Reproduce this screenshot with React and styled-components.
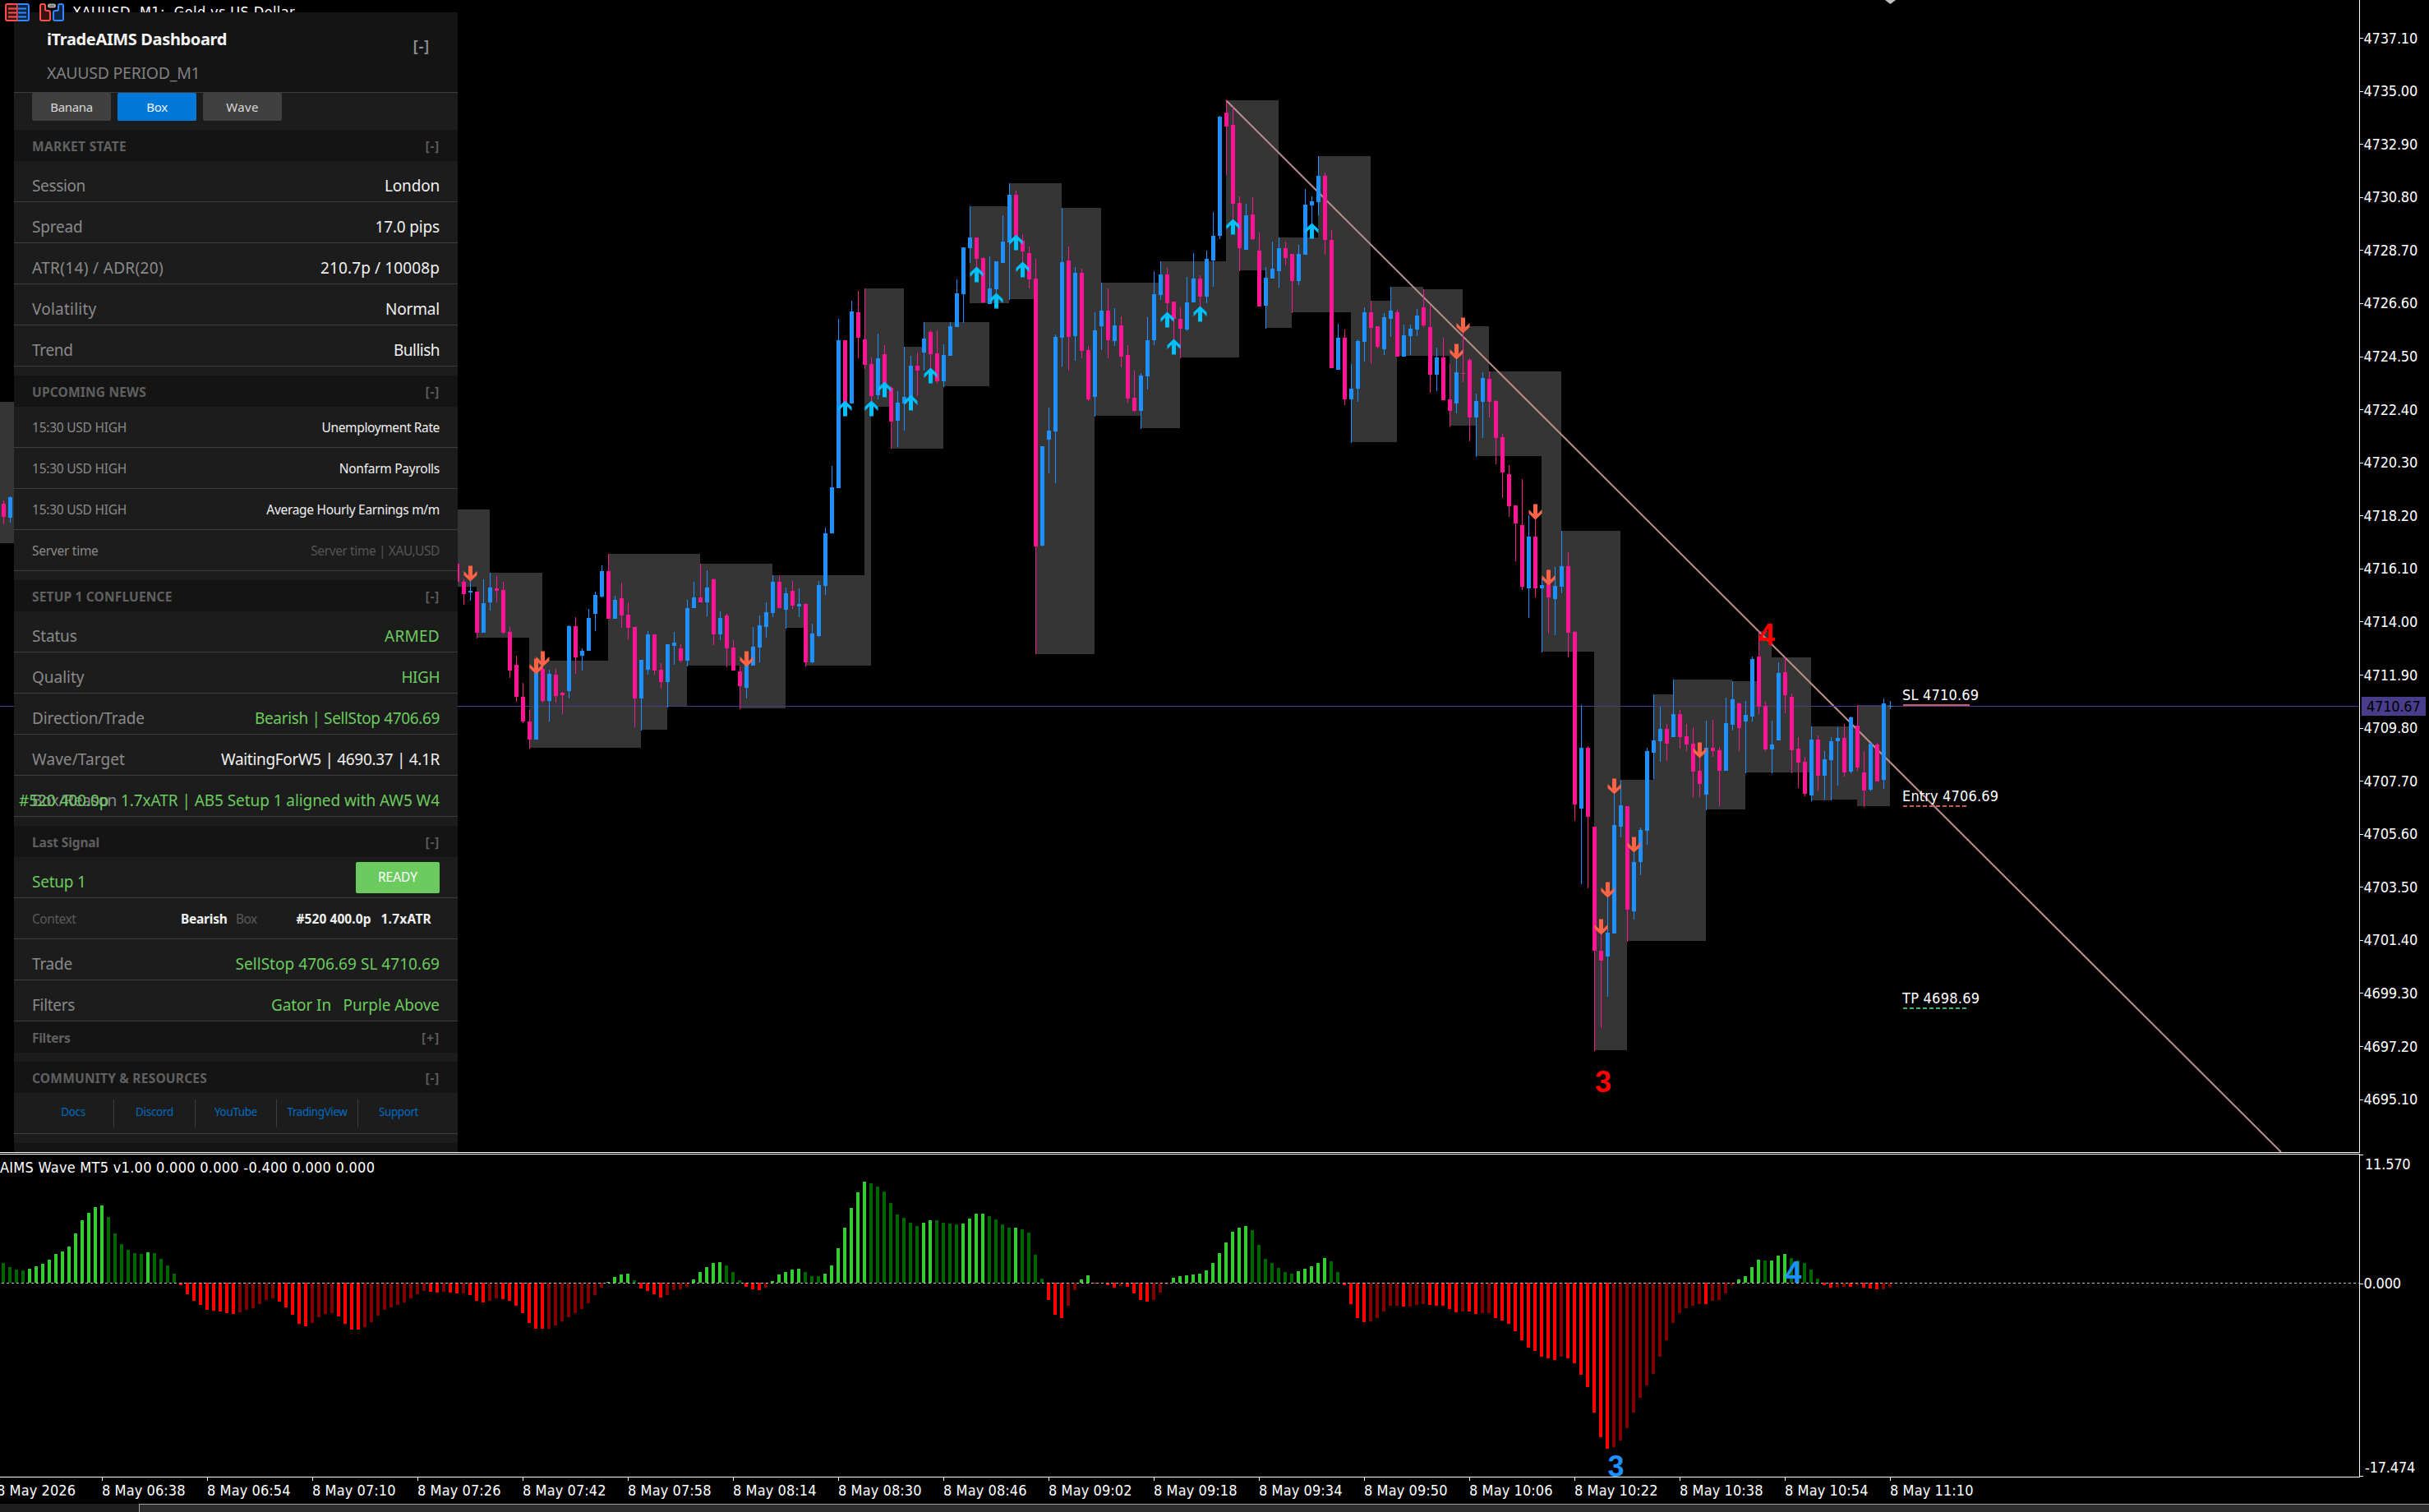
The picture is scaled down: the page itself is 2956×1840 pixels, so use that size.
import React, { useLayoutEffect, useRef, useState } from 'react';
import styled, { createGlobalStyle } from 'styled-components';

const UI_FONT = '"Noto Sans", "Open Sans", sans-serif';
const CHART_FONT = '"DejaVu Sans Condensed", "DejaVu Sans", sans-serif';

const c = {
  up: '#1e90ff',
  down: '#ff1493',
  box: '#353535',
  panel: '#1c1c1c',
  head: '#141414',
  rule: '#3d3d3d',
  green: '#6ccb5f',
  price: '#483d8b',
};

const GlobalStyle = createGlobalStyle`
  * { box-sizing: border-box; }
  body { margin: 0; background: #000; overflow: hidden; }
`;

/* ---------- data ---------- */

// index, direction, high, body top, body bottom, low
const CANDLES = `
0 d 609 613 629 638|1 u 604 605 630 636|69 d 686 686 708 708|70 d 705 708 723 736|71 u 706 719 721 731|72 d 720 720 770 777
73 u 705 734 770 770|74 u 697 715 733 743|75 d 701 716 719 733|76 d 708 718 770 771|77 d 763 769 816 825
78 d 798 809 848 854|79 d 831 848 878 880|80 d 864 878 900 911|81 u 817 818 900 900|82 d 810 814 853 855
83 u 815 820 853 878|84 d 814 821 847 855|85 d 842 843 846 869|86 u 761 762 841 850|87 d 751 762 800 820
88 u 789 792 798 816|89 u 741 752 792 792|90 u 720 724 747 768|91 u 688 695 726 727|92 d 674 695 753 753
93 u 725 730 753 753|94 d 709 728 749 764|95 d 733 748 764 778|96 d 763 763 850 885|97 u 803 803 850 889
98 u 768 772 815 821|99 d 772 772 816 821|100 d 807 815 830 838|101 u 784 784 830 861|102 u 769 782 786 809
103 d 784 789 804 806|104 u 730 740 804 811|105 u 708 727 740 740|106 d 686 727 733 733|107 u 694 715 733 750
108 d 704 705 772 785|109 u 744 752 772 779|110 d 747 749 789 812|111 d 779 788 816 816|112 d 811 817 835 863
113 u 809 809 837 850|114 u 763 787 810 810|115 u 749 761 788 806|116 u 733 745 763 776|117 u 700 708 746 751
118 d 701 708 740 740|119 u 715 722 742 765|120 d 707 719 737 741|121 u 716 735 738 751|122 d 734 735 806 811
123 u 759 771 806 807|124 u 707 712 774 775|125 u 642 649 713 724|126 u 567 593 649 649|127 u 388 414 594 594
128 d 414 414 490 490|129 u 366 379 491 491|130 d 354 380 411 436|131 d 351 413 444 449|132 d 435 443 482 488
133 u 406 436 481 486|134 d 420 431 467 467|135 d 470 472 513 546|136 u 476 490 512 544|137 u 422 483 491 524
138 u 433 445 483 483|139 d 429 445 451 482|140 u 392 412 429 451|141 d 402 404 431 449|142 d 402 430 464 466
143 u 419 432 464 471|144 u 392 397 433 433|145 u 340 357 398 398|146 u 301 301 358 393|147 u 251 289 302 320
148 d 289 289 315 326|149 d 313 314 368 369|150 u 312 351 370 370|151 u 318 318 352 358|152 u 262 294 320 320
153 u 223 237 295 365|154 d 232 237 287 287|155 d 285 293 306 320|156 d 300 308 340 351|157 d 315 339 665 796
158 u 543 543 664 665|159 u 496 524 535 576|160 u 407 410 525 588|161 u 253 319 411 446|162 d 300 317 410 451
163 u 325 332 409 439|164 d 327 332 427 436|165 d 421 426 486 488|166 u 380 402 483 507|167 u 344 378 397 426
168 d 351 378 414 436|169 u 375 396 415 421|170 d 385 396 434 447|171 d 420 432 485 490|172 d 451 484 500 501
173 u 454 457 500 522|174 u 386 414 458 474|175 u 330 358 414 420|176 u 318 334 359 365|177 d 326 334 369 381
178 d 367 367 388 414|179 d 374 388 400 436|180 u 337 368 401 403|181 u 308 339 368 368|182 d 335 339 361 373
183 u 305 315 361 369|184 u 258 287 317 349|185 u 141 142 287 291|186 d 122 137 154 213|187 d 130 152 248 267
188 d 239 247 302 330|189 u 248 262 304 304|190 d 240 261 291 292|191 d 283 305 373 373|192 u 325 338 372 400
193 u 294 327 339 339|194 u 289 302 330 350|195 d 294 302 314 323|196 d 309 309 342 381|197 u 298 309 342 347
198 u 230 249 310 310|199 u 239 245 250 273|200 u 190 214 246 262|201 d 210 214 292 310|202 d 280 292 448 448
203 u 394 411 450 450|204 d 401 411 486 493|205 u 443 473 486 539|206 u 413 415 473 489|207 u 374 380 416 440
208 d 366 380 399 443|209 d 397 397 422 424|210 u 381 386 425 432|211 u 349 378 388 410|212 d 377 380 434 434
213 u 395 408 434 434|214 u 395 400 409 432|215 u 376 384 401 409|216 d 352 374 396 398|217 d 372 398 456 478
218 u 423 435 456 476|219 d 411 435 487 487|220 d 443 486 500 519|221 u 437 453 491 503|222 d 404 454 455 465
223 d 436 438 508 537|224 u 479 488 508 556|225 u 453 460 489 533|226 d 452 461 489 508|227 d 487 488 533 565
228 d 528 532 575 606|229 d 566 577 616 629|230 d 615 615 637 683|231 d 583 639 714 718|232 u 627 653 716 752
233 d 631 653 716 727|234 u 704 712 716 794|235 d 710 711 727 771|236 u 690 713 729 773|237 u 646 689 714 722
238 d 672 689 770 800|239 d 768 769 979 999|240 u 858 910 984 1076|241 d 908 910 994 1081|242 d 1006 1006 1157 1279
243 d 1135 1157 1169 1251|244 u 1091 1135 1164 1213|245 u 965 1004 1136 1136|246 u 949 980 1006 1019
247 d 981 981 1107 1146|248 u 1036 1049 1109 1119|249 u 1007 1010 1049 1065|250 u 910 914 1011 1028
251 u 845 901 916 948|252 u 860 887 902 927|253 d 881 887 905 926|254 u 827 869 897 897|255 d 864 869 897 911
256 d 881 896 906 914|257 d 885 905 939 970|258 d 922 938 954 970|259 u 877 910 967 986|260 d 876 910 914 921
261 d 909 913 938 981|262 u 849 880 938 938|263 u 829 851 882 889|264 d 855 856 886 914|265 u 853 870 878 941
266 u 799 802 872 878|267 d 768 799 860 869|268 d 854 859 912 914|269 u 877 906 912 941|270 u 806 819 901 901
271 d 800 818 846 868|272 d 844 848 913 941|273 d 897 911 928 959|274 d 921 927 966 969|275 u 884 900 968 975
276 d 895 900 944 962|277 u 914 924 944 973|278 u 897 902 925 974|279 u 885 898 902 956|280 d 881 898 940 945
281 u 872 873 939 941|282 d 858 883 934 938|283 d 914 940 962 982|284 u 904 905 961 963|285 d 904 906 951 951
286 u 850 856 949 960|287 u 853 859 860 863`
  .trim()
  .split(/[|\n]/)
  .map((s) => {
    const [i, dir, hi, top, bottom, lo] = s.trim().split(' ');
    return { x: i * 8 + 4, dir, hi: +hi, top: +top, bottom: +bottom, lo: +lo };
  });

// left, top, right, bottom
const BOXES = [
  [0, 489, 20, 661], [550, 620, 596, 714], [580, 697, 660, 776], [644, 776, 660, 804], [644, 804, 780, 910],
  [740, 674, 852, 810], [740, 810, 836, 859], [740, 859, 812, 888], [852, 686, 940, 810], [900, 700, 956, 862],
  [940, 700, 1052, 764], [980, 700, 1060, 810], [1052, 351, 1060, 810], [1052, 351, 1100, 495],
  [1084, 422, 1148, 546], [1124, 392, 1204, 470], [1180, 251, 1228, 369], [1228, 223, 1292, 364],
  [1260, 364, 1332, 796], [1292, 253, 1340, 506], [1340, 344, 1412, 506], [1388, 344, 1436, 521],
  [1412, 318, 1508, 435], [1492, 122, 1556, 329], [1540, 289, 1572, 399], [1556, 289, 1604, 380],
  [1604, 190, 1668, 380], [1644, 380, 1700, 538], [1668, 366, 1700, 538], [1692, 349, 1732, 433],
  [1732, 352, 1780, 433], [1764, 397, 1812, 518], [1796, 452, 1900, 555], [1876, 452, 1900, 793],
  [1900, 646, 1940, 793], [1940, 646, 1972, 949], [1940, 949, 1980, 1278], [1972, 949, 2076, 1145],
  [2012, 845, 2124, 985], [2036, 827, 2108, 985], [2108, 829, 2140, 940], [2140, 768, 2156, 940],
  [2156, 800, 2204, 940], [2204, 884, 2229, 974], [2229, 884, 2268, 973], [2260, 858, 2300, 981],
];

const SELLS = [
  [572, 707], [652, 820], [660, 811], [908, 811], [1780, 405], [1772, 437], [1868, 632], [1884, 712],
  [1964, 966], [1988, 1037], [1956, 1092], [1948, 1137], [2068, 922],
];
const BUYS = [
  [1028, 488], [1060, 488], [1076, 465], [1108, 481], [1132, 448], [1188, 325], [1212, 357], [1236, 286],
  [1244, 319], [1420, 380], [1428, 413], [1460, 373], [1500, 267], [1596, 272],
];

// Histogram runs; L/D = rising/falling above zero, R/M = rising/falling below zero.
// Values are thirds of a pixel, 514 is the zero level.
const WAVE_ZERO = 514;
const WAVE_TONES = { L: '#32cd32', D: '#006400', R: '#ff0000', M: '#800000' };
const WAVE = `
D 441 456 465 468 L 462 453 444 429 408 399 381 333 285 258 237 231 D 273 333 372 393 405 408 L 402
D 405 426 450 480 R 522 555 579 594 612 615 618 624 627 M 621 612 606 591 576 570 R 582 603 630 663 672
M 660 639 627 624 R 636 663 684 684 M 675 657 633 612 603 594 585 570 555 543 R 546 549 M 546 R 549 552
M 552 R 558 579 585 M 579 570 R 573 579 597 624 660 681 681 M 681 669 654 639 624 609 588 558 531
L 510 492 483 480 D 504 R 534 543 555 567 M 558 540 537 528 L 501 474 456 441 438 D 450 474 504
R 528 537 540 M 531 L 507 483 474 465 462 D 474 489 489 L 480 450 387 312 240 183 144
D 150 162 180 222 264 276 294 306 L 294 285 D 285 294 297 300 L 297 279 261 261 D 270 282 300 312 L 312
D 318 330 411 498 R 576 630 642 M 597 540 L 501 486 R 517 M 517 R 522 531 M 525 R 528 552 576 582
M 576 549 519 L 495 489 486 483 480 468 441 405 366 327 312 306 D 321 375 426 441 459 474 480
L 471 462 453 441 423 D 435 474 R 522 591 642 657 M 654 642 618 597 597 R 600 M 600 594 591
R 594 597 597 609 621 M 618 R 618 627 M 624 624 R 642 651 663 690 723 750 762 783 789 795 M 783
R 789 807 849 894 987 1077 1119 M 1113 1089 1044 987 933 888 846 783 723 660 624 606 597 591 R 591
M 579 576 552 522 L 501 489 456 429 D 432 L 432 414 408 D 423 432 441 465 498 R 522 531 M 531 528
R 528 M 522 R 531 534 537 M 537 528`
  .trim()
  .split(/\s+/)
  .reduce(
    (acc, t) => {
      if (WAVE_TONES[t]) return { ...acc, tone: t };
      acc.bars.push({ tone: acc.tone, h: Math.round((WAVE_ZERO - t) / 3) });
      return acc;
    },
    { tone: 'D', bars: [] },
  ).bars;

const PRICES = Array.from({ length: 21 }, (_, i) => (4737.1 - i * 2.1).toFixed(2));

const TIMES = Array.from({ length: 18 }, (_, i) => {
  const m = 6 * 60 + 38 + i * 16;
  const p = (n) => String(n).padStart(2, '0');
  return `8 May ${p(Math.floor(m / 60))}:${p(m % 60)}`;
});

/* ---------- layout ---------- */

const Screen = styled.main`
  width: 2956px;
  height: 1840px;
  display: flex;
  flex-direction: column;
  overflow: hidden;
  background: #000;
  color: #fff;
  font-family: ${CHART_FONT};
  font-stretch: condensed;
  font-size: 18px;
  line-height: 22px;
`;

const Pane = styled.section`
  position: relative;
  display: grid;
  grid-template-columns: 2871px 85px;
  height: ${(p) => p.$h}px;
  flex: none;
`;

const Plot = styled.div`
  position: relative;
  overflow: hidden;
  border-bottom: ${(p) => (p.$rule ? '1px solid #fff' : 'none')};
  border-top: ${(p) => (p.$rule ? '1px solid #fff' : 'none')};
`;

const Canvas = styled.svg`
  display: block;
  shape-rendering: crispEdges;
  text {
    font-family: ${CHART_FONT};
    font-stretch: condensed;
    font-size: 18px;
    fill: #fff;
  }
`;

const WaveMark = styled.text`
  && {
    font: bold 36px 'Liberation Sans', Arial, sans-serif;
    fill: ${(p) => p.$tone};
    text-anchor: middle;
  }
`;

const Separator = styled.div`
  width: 2872px;
  height: 2px;
  flex: none;
  border-top: 1px solid #fff;
`;

const PriceAxis = styled.div`
  position: relative;
  display: flex;
  flex-direction: column;
  padding-top: 14.3px;
  border-left: 1px solid #fff;
  overflow: hidden;
`;

const AxisLabel = styled.div`
  height: ${(p) => p.$h || 64.59}px;
  margin-top: ${(p) => p.$mt || 0}px;
  flex: none;
  display: flex;
  align-items: center;
  letter-spacing: -0.2px;
  &::before {
    content: '';
    width: 4px;
    height: 1px;
    margin-right: ${(p) => p.$gap || 0.5}px;
    background: ${(p) => (p.$tickless ? 'transparent' : '#fff')};
  }
`;

const PriceTag = styled.div`
  position: absolute;
  left: 2px;
  top: 848px;
  width: 78px;
  height: 23px;
  padding-left: 6px;
  background: ${c.price};
  color: #000;
  line-height: 23px;
  letter-spacing: -0.2px;
`;

const WaveAxis = styled(PriceAxis)`
  padding: 0;
  background:
    linear-gradient(#fff, #fff) 0 1px / 4px 1px no-repeat,
    linear-gradient(#fff, #fff) 0 392px / 4px 1px no-repeat;
`;

const TimeAxis = styled.div`
  height: 32px;
  flex: none;
  display: flex;
  margin-left: -4px;
`;

const TimeLabel = styled.div`
  width: 128px;
  flex: none;
  padding-top: 5px;
  white-space: nowrap;
  letter-spacing: 0.08px;
  background: linear-gradient(#fff, #fff) 0 0 / 1px 4px no-repeat;
`;

const ScrollBar = styled.div`
  flex: 1;
  background: #1e1e1e;
  padding-left: 169px;
`;

const ScrollThumb = styled.div`
  height: 100%;
  background: #2d2d2d;
  border-top: 1px solid #a0a0a0;
  border-left: 1px solid #a0a0a0;
`;

const SymbolTitle = styled.div`
  position: absolute;
  left: 88px;
  top: 4px;
  white-space: pre;
`;

const Toolbar = styled.svg`
  position: absolute;
  left: 0;
  top: 0;
`;

/* ---------- dashboard panel ---------- */

const Panel = styled.aside`
  position: absolute;
  left: 17px;
  top: 15px;
  width: 540px;
  height: 1387px;
  overflow: hidden;
  display: flex;
  flex-direction: column;
  background: ${c.panel};
  font-family: ${UI_FONT};
  font-size: 19px;
  font-stretch: normal;
  line-height: 26px;
`;

const PanelHeader = styled.header`
  height: 98px;
  flex: none;
  display: flex;
  justify-content: space-between;
  padding: 20px 34px 0 40px;
  background: ${c.head};
  border-bottom: 1px solid ${c.rule};
`;

const Heading = styled.h1`
  margin: 0 0 15px;
  font-size: 20px;
  line-height: 26px;
  font-weight: 700;
  color: #f5f5f5;
`;

const Subtitle = styled.div`
  font-size: 19.5px;
  color: #808080;
`;

const Collapse = styled.span`
  padding-top: ${(p) => (p.$large ? 8 : 0)}px;
  font-size: ${(p) => (p.$large ? 19 : 16)}px;
  font-weight: 600;
  color: ${(p) => (p.$large ? '#8e8e8e' : '#606060')};
`;

const Tabs = styled.nav`
  display: flex;
  gap: 8px;
  height: 45px;
  flex: none;
  padding-left: 22px;
`;

const Tab = styled.button`
  width: 96px;
  height: 34px;
  padding: 0;
  border: 0;
  border-radius: 2px;
  background: ${(p) => (p.$active ? '#0078d7' : '#404040')};
  color: ${(p) => (p.$active ? '#f0f0f0' : '#d8d8d8')};
  font: 15px / 32px ${UI_FONT};
`;

const SectionHead = styled.div`
  height: 38px;
  flex: none;
  display: flex;
  align-items: center;
  justify-content: space-between;
  margin-top: ${(p) => (p.$tight ? 0 : 11)}px;
  padding: 2px 22px 0;
  background: ${c.head};
  color: #606060;
  font-size: 15.5px;
  font-weight: 700;
`;

const Row = styled.div`
  height: 50px;
  flex: none;
  display: flex;
  align-items: center;
  justify-content: space-between;
  padding: ${(p) => (p.$small ? 1 : 10)}px 22px 0;
  border-bottom: 1px solid ${c.rule};
  font-size: ${(p) => (p.$small ? 15.5 : 19)}px;
  white-space: pre;
`;

const Label = styled.span`
  flex: none;
  width: ${(p) => (p.$overlap ? '0' : 'auto')};
  color: ${(p) => p.$tone || '#8a8a8a'};
`;

const Value = styled.span`
  flex: none;
  margin-left: ${(p) => (p.$overlap ? -40 : 0)}px;
  color: ${(p) => p.$tone || '#f0f0f0'};
`;

const Badge = styled.span`
  width: 102px;
  height: 38px;
  margin-top: -9px;
  border-radius: 2px;
  background: ${c.green};
  color: #fff;
  font-size: 15.5px;
  line-height: 37px;
  text-align: center;
`;

const Context = styled.div`
  display: grid;
  grid-template-columns: 181px 67px 73.5px 103px 1fr;
  justify-items: start;
  width: 100%;
  font-weight: 700;
  color: #f0f0f0;
`;

const Muted = styled.span`
  font-weight: 400;
  color: #5a5a5a;
`;

const Links = styled.div`
  height: 50px;
  flex: none;
  display: grid;
  grid-template-columns: repeat(5, 99px);
  padding: 8px 0 7px 22px;
  border-bottom: 1px solid ${c.rule};
`;

const Link = styled.a`
  border-left: 1px solid ${(p) => (p.$first ? 'transparent' : c.rule)};
  text-align: center;
  color: #006cc0;
  font-size: 13.5px;
  line-height: 31px;
`;

const PanelFooter = styled.div`
  flex: 1;
  margin-top: 11px;
  background: ${c.head};
`;

const FitSpan = styled.span`
  display: inline-block;
  white-space: pre;
`;

/* Tracks its text in or out so that it fills the given width. */
function Fit({ w, children }) {
  const ref = useRef(null);
  const [spacing, setSpacing] = useState(0);
  useLayoutEffect(() => {
    const natural = ref.current.getBoundingClientRect().width;
    setSpacing((w + 1 - natural) / children.length);
  }, [w, children]);
  return (
    <FitSpan ref={ref} style={{ letterSpacing: `${spacing}px` }}>
      {children}
    </FitSpan>
  );
}

function Section({ title, w, sign = '[-]', tight }) {
  return (
    <SectionHead $tight={tight}>
      <Fit w={w}>{title}</Fit>
      <Collapse>
        <Fit w={sign === '[-]' ? 16.5 : 21}>{sign}</Fit>
      </Collapse>
    </SectionHead>
  );
}

function DataRow({ label, lw, value, vw, tone, labelTone, small, overlap }) {
  return (
    <Row $small={small}>
      <Label $tone={labelTone} $overlap={overlap}>
        <Fit w={lw}>{label}</Fit>
      </Label>
      <Value $tone={tone} $overlap={overlap}>
        <Fit w={vw}>{value}</Fit>
      </Value>
    </Row>
  );
}

const MARKET = [
  ['Session', 64, 'London', 66],
  ['Spread', 60.5, '17.0 pips', 77.5],
  ['ATR(14) / ADR(20)', 159, '210.7p / 10008p', 144],
  ['Volatility', 77.5, 'Normal', 65],
  ['Trend', 48.5, 'Bullish', 55],
];
const NEWS = [
  ['Unemployment Rate', 142.4],
  ['Nonfarm Payrolls', 121.3],
  ['Average Hourly Earnings m/m', 209.7],
];
const SETUP = [
  ['Status', 53.6, 'ARMED', 66, c.green],
  ['Quality', 62.5, 'HIGH', 45.5, c.green],
  ['Direction/Trade', 136, 'Bearish | SellStop 4706.69', 224, c.green],
  ['Wave/Target', 112, 'WaitingForW5 | 4690.37 | 4.1R', 265],
];
const LINKS = [['Docs', 28.7], ['Discord', 45], ['YouTube', 51], ['TradingView', 72], ['Support', 47]];

function Dashboard() {
  return (
    <Panel>
      <PanelHeader>
        <div>
          <Heading><Fit w={218}>iTradeAIMS Dashboard</Fit></Heading>
          <Subtitle><Fit w={185.5}>XAUUSD PERIOD_M1</Fit></Subtitle>
        </div>
        <Collapse $large><Fit w={19.5}>[-]</Fit></Collapse>
      </PanelHeader>
      <Tabs>
        <Tab><Fit w={50.5}>Banana</Fit></Tab>
        <Tab $active><Fit w={24.5}>Box</Fit></Tab>
        <Tab><Fit w={38.6}>Wave</Fit></Tab>
      </Tabs>

      <Section tight title="MARKET STATE" w={114} />
      {MARKET.map(([label, lw, value, vw]) => (
        <DataRow key={label} label={label} lw={lw} value={value} vw={vw} />
      ))}

      <Section title="UPCOMING NEWS" w={138} />
      {NEWS.map(([value, vw]) => (
        <DataRow key={value} small label="15:30 USD HIGH" lw={114} value={value} vw={vw} />
      ))}
      <DataRow small label="Server time" lw={79.6} value="Server time | XAU,USD" vw={155.8} tone="#555" />

      <Section title="SETUP 1 CONFLUENCE" w={169.5} />
      {SETUP.map(([label, lw, value, vw, tone]) => (
        <DataRow key={label} label={label} lw={lw} value={value} vw={vw} tone={tone} />
      ))}
      <DataRow
        overlap
        label="Box/Reason"
        lw={102}
        value="#520 400.0p   1.7xATR | AB5 Setup 1 aligned with AW5 W4"
        vw={511}
        tone={c.green}
      />

      <Section title="Last Signal" w={81} />
      <Row>
        <Label $tone={c.green}><Fit w={64.7}>Setup 1</Fit></Label>
        <Badge><Fit w={47}>READY</Fit></Badge>
      </Row>
      <Row $small>
        <Context>
          <Muted><Fit w={52.4}>Context</Fit></Muted>
          <Fit w={55.5}>Bearish</Fit>
          <Muted><Fit w={24.5}>Box</Fit></Muted>
          <Fit w={90}>#520 400.0p</Fit>
          <Fit w={60.5}>1.7xATR</Fit>
        </Context>
      </Row>
      <DataRow label="Trade" lw={48} value="SellStop 4706.69 SL 4710.69" vw={247.5} tone={c.green} />
      <DataRow label="Filters" lw={51} value="Gator In   Purple Above" vw={204} tone={c.green} />

      <Section tight title="Filters" w={45.5} sign="[+]" />
      <Section title="COMMUNITY & RESOURCES" w={212} />
      <Links>
        {LINKS.map(([name, w], i) => (
          <Link key={name} $first={i === 0}><Fit w={w}>{name}</Fit></Link>
        ))}
      </Links>
      <PanelFooter />
    </Panel>
  );
}

/* ---------- charts ---------- */

function Arrow({ x, y, up }) {
  return (
    <path
      transform={`translate(${x + 0.5} ${y}) scale(1 ${up ? -1 : 1})`}
      d="M-2.5-18.5H2.5V-6.5L8-12V-7L0 .5L-8-7V-12L-2.5-6.5Z"
      fill={up ? '#00bfff' : '#ff6347'}
      shapeRendering="auto"
    />
  );
}

function PriceChart() {
  return (
    <Canvas width="2871" height="1402">
      {BOXES.map(([x1, y1, x2, y2], i) => (
        <rect key={i} x={x1} y={y1} width={x2 - x1} height={y2 - y1} fill={c.box} />
      ))}
      <path d="M1492 122L2776 1402" stroke="#bc8f8f" strokeWidth="2" shapeRendering="auto" />
      <path d="M0 859.5H2871" stroke={c.price} />
      {CANDLES.map(({ x, dir, hi, top, bottom, lo }) => (
        <g key={x} fill={dir === 'u' ? c.up : c.down}>
          <rect x={x} y={hi} width="1" height={lo - hi} />
          <rect x={x - 2} y={top} width="5" height={bottom - top} />
        </g>
      ))}
      {SELLS.map(([x, y]) => <Arrow key={`${x}`} x={x} y={y} />)}
      {BUYS.map(([x, y]) => <Arrow key={`${x}`} x={x} y={y} up />)}
      <path d="M2316 858H2397" stroke="#cd5c5c" strokeWidth="2" />
      <path d="M2316 981H2393" stroke="#cd5c5c" strokeWidth="2" strokeDasharray="5 3" />
      <path d="M2316 1227H2393" stroke="#3cb371" strokeWidth="2" strokeDasharray="5 3" />
      <text x="2315" y="852" textLength="93">SL 4710.69</text>
      <text x="2315" y="975" textLength="117">Entry 4706.69</text>
      <text x="2315" y="1221" textLength="94">TP 4698.69</text>
      <WaveMark x="1951" y="1329" $tone="#ff0000">3</WaveMark>
      <WaveMark x="2150" y="785" $tone="#ff0000">4</WaveMark>
      <path d="M2294 0H2307L2300.5 5Z" fill="#c0c0c0" shapeRendering="auto" />
    </Canvas>
  );
}

function WaveChart() {
  return (
    <Canvas width="2871" height="392">
      {WAVE.map(({ tone, h }, i) => (
        <rect
          key={i}
          x={i * 8 + 2}
          y={h > 0 ? 156 - h : 156}
          width="4"
          height={Math.max(1, Math.abs(h))}
          fill={WAVE_TONES[tone]}
        />
      ))}
      <path d="M2 156.5H2871" stroke="#c0c0c0" strokeDasharray="3 3" />
      <text x="0" y="22" textLength="456">AIMS Wave MT5 v1.00 0.000 0.000 -0.400 0.000 0.000</text>
      <WaveMark x="1966.5" y="391.5" $tone={c.up}>3</WaveMark>
      <WaveMark x="2182.5" y="156" $tone={c.up}>4</WaveMark>
    </Canvas>
  );
}

function ToolbarIcons() {
  return (
    <Toolbar width="90" height="30" fill="none" strokeWidth="2">
      <path d="M21 5H9Q7 5 7 7V23Q7 25 9 25H21Z" fill="#3a1210" stroke="#ff5050" />
      <path d="M21.500 5H33Q35 5 35 7V23Q35 25 33 25H21.500" fill="#0b2545" stroke="#3388ff" />
      <path d="M10 10.500H20M10 15.500H20M10 20.500H20" stroke="#ff5050" />
      <path d="M22 10.500H32M22 15.500H32M22 20.500H32" stroke="#3388ff" />
      <path d="M51 5H53Q55 5 55 7V11Q55 13 57 13H59Q61 13 61 15V23Q61 25 59 25H51Q49 25 49 23V7Q49 5 51 5Z" fill="#3a1210" stroke="#ff5050" />
      <path d="M75 5H73Q71 5 71 7V11Q71 13 69 13H67Q65 13 65 15V23Q65 25 67 25H75Q77 25 77 23V7Q77 5 75 5Z" fill="#0b2545" stroke="#3388ff" />
      <rect x="59" y="5.500" width="8" height="3" rx="1.500" stroke="#b0b0b0" fill="#444" />
    </Toolbar>
  );
}

export default function App() {
  return (
    <Screen>
      <GlobalStyle />
      <Pane $h={1402}>
        <Plot>
          <PriceChart />
          <SymbolTitle><Fit w={270}>XAUUSD, M1:  Gold vs US Dollar</Fit></SymbolTitle>
          <Dashboard />
          <ToolbarIcons />
        </Plot>
        <PriceAxis>
          {PRICES.map((p) => <AxisLabel key={p}>{p}</AxisLabel>)}
          <PriceTag>4710.67</PriceTag>
        </PriceAxis>
      </Pane>
      <Separator />
      <Pane $h={394}>
        <Plot $rule>
          <WaveChart />
        </Plot>
        <WaveAxis>
          <AxisLabel $h={26} $gap={2} $tickless>11.570</AxisLabel>
          <AxisLabel $h={26} $mt={119}>0.000</AxisLabel>
          <AxisLabel $h={26} $mt={198} $gap={2} $tickless>-17.474</AxisLabel>
        </WaveAxis>
      </Pane>
      <TimeAxis>
        <TimeLabel>8 May 2026</TimeLabel>
        {TIMES.map((t) => <TimeLabel key={t}>{t}</TimeLabel>)}
      </TimeAxis>
      <ScrollBar>
        <ScrollThumb />
      </ScrollBar>
    </Screen>
  );
}
